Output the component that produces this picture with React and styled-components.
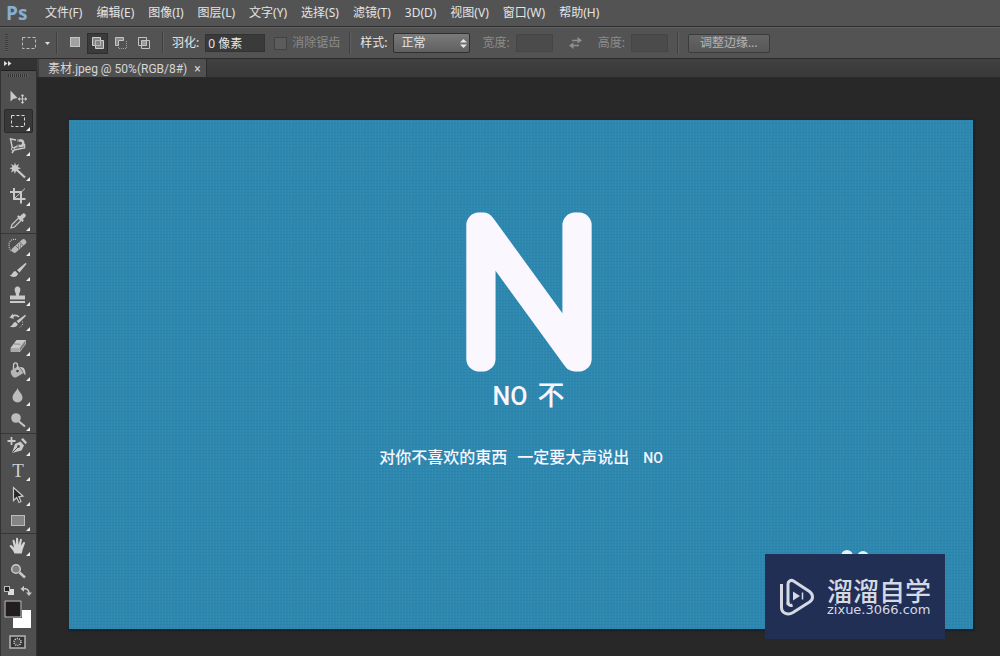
import React from 'react';
import styled, { createGlobalStyle, css } from 'styled-components';

const GlobalStyle = createGlobalStyle`
  * {
    box-sizing: border-box;
  }

  body {
    margin: 0;
    background: #282828;
    color: #e4e4e4;
    font-family: "Noto Sans", "Noto Sans CJK SC", sans-serif;
    font-size: 12px;
    line-height: 16px;
  }

  button, input, select {
    margin: 0;
    font: inherit;
    color: inherit;
  }
`;

const Window = styled.div`
  display: flex;
  flex-direction: column;
  min-height: 100vh;
`;

/* menu bar */

const MenuBar = styled.header`
  display: flex;
  align-items: center;
  height: 27px;
  padding-left: 6px;
  background: #535353;
  border-bottom: 1px solid #2e2e2e;
`;

const Logo = styled.span`
  width: 32px;
  color: #86afd8;
  font-family: "Open Sans", sans-serif;
  font-size: 19px;
  font-weight: 700;
  line-height: 24px;
`;

const Menu = styled.nav`
  display: flex;
`;

const MenuItem = styled.button`
  padding: 0 7px;
  border: 0;
  background: none;
  white-space: nowrap;
`;

/* options bar */

const OptionsBar = styled.div`
  display: flex;
  align-items: center;
  height: 32px;
  padding-left: 5px;
  background: #535353;
  border-top: 1px solid #616161;
  border-bottom: 1px solid #2b2b2b;
  white-space: nowrap;
`;

const Grip = styled.span`
  width: 3px;
  height: 18px;
  background: repeating-linear-gradient(#3a3a3a 0 1px, #5c5c5c 1px 2px);
`;

const Divider = styled.span`
  width: 2px;
  height: 22px;
  margin: 0 ${(p) => p.$gap || 8}px;
  background: #3f3f3f;
  border-right: 1px solid #5f5f5f;
`;

const Preset = styled.button`
  display: flex;
  align-items: center;
  gap: 7px;
  margin-left: 13px;
  padding: 0;
  border: 0;
  background: none;
`;

const ModeGroup = styled.div`
  display: flex;
  gap: 2px;
`;

const ModeButton = styled.button`
  display: flex;
  align-items: center;
  justify-content: center;
  width: 21px;
  height: 21px;
  padding: 0;
  border: 1px solid ${(p) => (p.$active ? '#2e2e2e' : 'transparent')};
  background: ${(p) => (p.$active ? '#3b3b3b' : 'none')};
`;

const Label = styled.label`
  color: ${(p) => (p.$muted ? '#8c8c8c' : '#e4e4e4')};
`;

const TextBox = styled.input`
  width: ${(p) => p.$width}px;
  height: 18px;
  margin: 0 ${(p) => p.$after || 0}px 0 6px;
  padding: 0 2px;
  border: 1px solid #333;
  border-radius: 0;
  background: #3a3a3a;

  &:disabled {
    border-color: #454545;
    background: #4b4b4b;
  }
`;

const CheckBox = styled.input`
  appearance: none;
  width: 13px;
  height: 13px;
  margin: 0 5px 0 0;
  border: 1px solid #424242;
  background: #5c5c5c;
`;

const SelectWrap = styled.span`
  display: grid;
  align-items: center;
  margin: 0 12px 0 6px;

  > * {
    grid-area: 1 / 1;
  }

  svg {
    justify-self: end;
    margin-right: 3px;
    pointer-events: none;
  }
`;

const Select = styled.select`
  appearance: none;
  width: 77px;
  height: 20px;
  padding: 0 7px;
  border: 1px solid #2f2f2f;
  border-radius: 2px;
  background: linear-gradient(#7a7a7a, #606060);
`;

const SwapButton = styled.button`
  display: flex;
  margin: 0 16px;
  padding: 0;
  border: 0;
  background: none;
`;

const RefineButton = styled.button`
  height: 19px;
  padding: 0 11px;
  border: 1px solid #3b3b3b;
  border-radius: 2px;
  background: linear-gradient(#656565, #575757);
  color: #b4b4b4;
  line-height: 16px;
`;

/* workspace */

const Workspace = styled.div`
  display: flex;
  flex: 1;
  background: #282828;
`;

const ToolPanel = styled.aside`
  display: flex;
  flex-direction: column;
  flex: none;
  width: 37px;
  background: #4f4f4f;
  border-left: 1px solid #333;
  border-right: 1px solid #333;
`;

const PanelHead = styled.button`
  display: flex;
  align-items: center;
  height: 12px;
  padding: 0 0 2px 3px;
  border: 0;
  border-bottom: 1px solid #222;
  background: #333;
`;

const PanelGrip = styled.span`
  width: 20px;
  height: 3px;
  margin: 3px auto 7px 7px;
  background: repeating-linear-gradient(90deg, #333 0 1px, #606060 1px 2px);
`;

const ToolGroup = styled.div`
  display: flex;
  flex-direction: column;
  gap: 1px;
  padding-left: 3px;

  & + & {
    border-top: 1px solid #363636;
  }
`;

const ToolButton = styled.button`
  position: relative;
  display: flex;
  align-items: center;
  justify-content: center;
  width: 29px;
  height: 24px;
  padding: 0 1px 0 0;
  border: 1px solid transparent;
  border-radius: 2px;
  background: none;

  ${(p) => p.$active && css`
    border-color: #2a2a2a;
    background: #383838;
  `}

  ${(p) => p.$more && css`
    &::after {
      content: "";
      position: absolute;
      right: 2px;
      bottom: 1px;
      border: 2px solid transparent;
      border-right-color: #eee;
      border-bottom-color: #eee;
    }
  `}
`;

const SwatchArea = styled.div`
  padding: 2px 0 0 3px;
  line-height: 0;
`;

const MaskButton = styled.button`
  align-self: flex-start;
  margin: 6px 0 0 8px;
  padding: 0;
  border: 0;
  background: none;
  line-height: 0;
`;

const Document = styled.main`
  display: flex;
  flex: 1;
  flex-direction: column;
  min-width: 0;
`;

const TabBar = styled.div`
  display: flex;
  height: 19px;
  padding-left: 2px;
  background: linear-gradient(#414141, #383838);
  border-bottom: 1px solid #2b2b2b;
`;

const Tab = styled.div`
  display: flex;
  align-items: center;
  gap: 7px;
  padding: 2px 5px 0 9px;
  background: #505050;
  border-right: 1px solid #2c2c2c;
  color: #d6d6d6;
  font-family: Roboto, "Noto Sans CJK SC", sans-serif;
`;

const CloseButton = styled.button`
  padding: 0;
  border: 0;
  background: none;
`;

const Stage = styled.div`
  position: relative;
  display: flex;
  flex: 1;
  padding: 42px 27px 27px 32px;
`;

const Canvas = styled.article`
  position: relative;
  display: flex;
  flex: 1;
  flex-direction: column;
  align-items: center;
  padding-top: 92px;
  overflow: hidden;
  background:
    repeating-linear-gradient(90deg, rgba(255, 255, 255, .03) 0 1px, transparent 1px 3px),
    repeating-linear-gradient(rgba(0, 30, 60, .05) 0 1px, transparent 1px 3px),
    #2d88b0;
  box-shadow: 1px 1px 2px 1px #14222a;
  color: #f8f6ff;
  font-family: "Noto Sans CJK SC", sans-serif;
`;

const Heading = styled.div`
  display: flex;
  flex-direction: column;
  align-items: center;
  padding-left: 15px;
`;

const BigLetter = styled.svg`
  display: block;
  overflow: visible;

  text {
    fill: #faf7ff;
    stroke: #faf7ff;
    stroke-width: 25px;
    stroke-linejoin: round;
    font-family: Inter, sans-serif;
    font-size: 184px;
    font-weight: 100;
    text-anchor: middle;
  }
`;

const Title = styled.h1`
  display: flex;
  align-items: baseline;
  gap: 10px;
  margin: 6px 0 0;
  font-size: 27px;
  font-weight: 500;
  line-height: 32px;

  span {
    font-family: Roboto, sans-serif;
    font-size: 25px;
  }
`;

const Subtitle = styled.p`
  display: flex;
  align-items: baseline;
  gap: 10px;
  margin: 31px 0 0;
  font-size: 16px;
  font-weight: 500;
  line-height: 24px;

  small {
    padding-left: 4px;
    font-family: Roboto, sans-serif;
    font-size: 14px;
  }
`;

const Ears = styled.svg`
  position: absolute;
  right: 104px;
  bottom: 64px;
`;

const Watermark = styled.div`
  position: absolute;
  right: 55px;
  bottom: 17px;
  display: flex;
  align-items: center;
  gap: 12px;
  width: 180px;
  height: 85px;
  padding-left: 14px;
  background: #222f55;
  color: #d5d9e4;
`;

const Brand = styled.div`
  font-family: "Noto Sans CJK SC", sans-serif;
  font-size: 26px;
  font-weight: 500;
  line-height: 26px;
`;

const Site = styled.div`
  font-family: "DejaVu Sans", sans-serif;
  font-size: 13px;
  line-height: 14px;
`;

const menus = [
  '文件(F)', '编辑(E)', '图像(I)', '图层(L)', '文字(Y)', '选择(S)',
  '滤镜(T)', '3D(D)', '视图(V)', '窗口(W)', '帮助(H)',
];

const modes = [
  {
    label: '新选区',
    art: <rect x="2.5" y="1.5" width="9" height="9" fill="#a2a2a2" stroke="#c4c4c4" />,
  },
  {
    label: '添加到选区',
    active: true,
    art: (
      <>
        <path d="M1.5 1.5h8v3h3v8h-8v-3h-3z" fill="#858585" stroke="#cfcfcf" />
        <path d="M9.5 5v4.5H5M4.5 9V4.5H9" fill="none" stroke="#b8b8b8" />
      </>
    ),
  },
  {
    label: '从选区减去',
    art: (
      <>
        <path d="M1.5 1.5h8v3h-5v5h-3z" fill="#8a8a8a" stroke="#c4c4c4" />
        <path d="M12.5 5v7.5H4.5V10" fill="none" stroke="#a0a0a0" strokeDasharray="1 1" />
      </>
    ),
  },
  {
    label: '与选区交叉',
    art: (
      <>
        <rect x="4.5" y="4.5" width="5" height="5" fill="#9a9a9a" />
        <path d="M1.5 1.5h8v8h-8zM4.5 4.5h8v8h-8z" fill="none" stroke="#c4c4c4" />
      </>
    ),
  },
];

const light = '#c9c9c9';

const toolGroups = [
  [
    {
      label: '移动工具',
      plain: true,
      art: (
        <>
          <path d="M2.5 4.5v11l2.7-2.6L9.5 12z" fill={light} />
          <path d="M14.5 9v8M10.5 13h8" stroke={light} />
          <path d="M14.5 8l-2 2.2h4zM14.5 18l-2-2.2h4zM9.8 13l2.2-2v4zM19.2 13L17 11v4z" fill={light} />
        </>
      ),
    },
    {
      label: '矩形选框工具',
      active: true,
      art: <rect x="3.5" y="4.5" width="13" height="11" fill="none" stroke="#dcdcdc" strokeDasharray="3 2" />,
    },
    {
      label: '磁性套索工具',
      art: (
        <>
          <path d="M8 4L2.5 3l2 9.5L11 9.5M4.5 12.5L6 14l-2 3M6 14l10.500-2V8" fill="none" stroke={light} strokeWidth="1.5" />
          <path d="M9 4.500h4.500a3 3 0 0 1 0 5.500H9" fill="none" stroke={light} strokeWidth="2.600" />
          <path d="M10 3v3M10 8.500v3" stroke="#555" />
          <circle cx="5" cy="13" r="1.5" fill="#4f4f4f" stroke={light} />
        </>
      ),
    },
    {
      label: '魔棒工具',
      art: (
        <>
          <path d="M7 1.500l1 3 3-1.500-1.200 3L13 7.300 9.800 8.500 11 11.500 8 10l-1 3-1.200-3L3 11.500l1.200-3L1.500 7.300 4.500 6 3 3l3 1.500z" fill={light} />
          <path d="M9.500 9.500l7.500 7" stroke={light} strokeWidth="2.200" />
        </>
      ),
    },
    {
      label: '裁剪工具',
      art: (
        <>
          <path d="M6 2v11h11.500M2 6h11v11.500" fill="none" stroke={light} strokeWidth="2" />
          <path d="M6.500 12.500L17 2.500" stroke={light} />
        </>
      ),
    },
    {
      label: '吸管工具',
      art: (
        <>
          <path d="M3 17l1-3.500 6.500-6.500 2.500 2.500L6.500 16z" fill="#555" stroke={light} strokeWidth="1.200" />
          <path d="M9 5.500l1.500-1.200 1.500 1L14.300 3a2 2 0 0 1 2.900 2.900L14.800 8l1 1.500-1.300 1.500z" fill={light} />
        </>
      ),
    },
  ],
  [
    {
      label: '污点修复画笔工具',
      art: (
        <>
          <path d="M8 3.500C4.500 2.500 1 5 1 8.500s1 6 3.500 7" fill="none" stroke={light} strokeDasharray="1 1" strokeWidth="1.300" />
          <path d="M6.500 14L15.500 6" stroke="#b9b9b9" strokeWidth="5.500" strokeLinecap="round" />
          <path d="M7.500 9.500l4 4M11.500 6l4 4" stroke="#6d6d6d" />
          <path d="M10 9h1M12 9h1M10 11h1M12 11h1" stroke="#555" />
        </>
      ),
    },
    {
      label: '画笔工具',
      art: (
        <>
          <path d="M17.800 1.800L9 9l2.500 2.500 7-8.500z" fill={light} />
          <path d="M1.500 14.500c3 .2 2.500-4 5.700-4.500l2.800 2.500c-.5 3.500-5 4.500-8.500 2z" fill={light} />
        </>
      ),
    },
    {
      label: '仿制图章工具',
      art: (
        <>
          <path d="M6.700 4.200a2.900 2.900 0 1 1 5.600 0c0 1.800-1.300 2.500-1.300 5.300h6v4H2v-4h6c0-2.800-1.300-3.500-1.300-5.300z" fill={light} />
          <path d="M2 16h15" stroke={light} strokeWidth="2" />
        </>
      ),
    },
    {
      label: '历史记录画笔工具',
      art: (
        <>
          <path d="M17.500 3.500L8.500 10l2.200 2.200 7-7z" fill={light} />
          <path d="M1.500 15.500c3.500 0 2.500-4 6-4.500l2.300 2c-.8 3.500-5 4-8.300 2.500z" fill={light} />
          <path d="M4 5.500c3-2 5.500-1 7 .5" fill="none" stroke={light} strokeWidth="1.700" />
          <path d="M1.500 6.500l4.300 1.500L5 2.500z" fill={light} />
          <path d="M14.500 10.500c1 2.500-.5 5-3.500 6" fill="none" stroke={light} strokeDasharray="1 1.500" />
        </>
      ),
    },
    {
      label: '橡皮擦工具',
      art: (
        <>
          <path d="M8.500 4h9l-6 8H2.500z" fill={light} />
          <path d="M2.500 12h9v4h-9z" fill="#a8a8a8" />
          <path d="M11.500 12l6-8v4l-6 8z" fill="#7c7c7c" stroke={light} strokeWidth=".7" />
          <path d="M6 8l6.500.2" stroke="#888" />
        </>
      ),
    },
    {
      label: '油漆桶工具',
      art: (
        <>
          <path d="M3 9.500L10.500 5l5 7-7.500 4.500c-3 .8-6-3.500-5-7z" fill="#b5b5b5" />
          <path d="M5.500 8.500V4.500c0-3.500 4-3.500 4 0v5" fill="none" stroke={light} strokeWidth="1.300" />
          <circle cx="9.500" cy="10" r="1.300" fill="#444" />
          <path d="M11.500 6c5-.5 6 3 6 8-1.500-.5-2-2-2.500-4z" fill={light} />
        </>
      ),
    },
    {
      label: '模糊工具',
      art: <path d="M9.500 2c1 3.500 5 5.700 5 9.500a5 5 0 0 1-10 0C4.500 7.700 8.500 5.500 9.500 2z" fill="#bdbdbd" />,
    },
    {
      label: '减淡工具',
      art: (
        <>
          <circle cx="8" cy="7" r="4.800" fill="#bcbcbc" />
          <path d="M11 10.500l6 5" stroke={light} strokeWidth="2" />
        </>
      ),
    },
  ],
  [
    {
      label: '添加锚点工具',
      art: (
        <>
          <path d="M-.5 5h8M3.500 1v8" stroke={light} strokeWidth="1.800" />
          <path d="M4 17l3-9 5.500-2.500 3.500 4-2.500 5z" fill={light} />
          <path d="M13 3.500l2-1.500 4 4.500-1.500 1.700z" fill={light} />
          <path d="M4.500 16.500L10 11" stroke="#4f4f4f" />
          <circle cx="10.500" cy="10.500" r="1.400" fill="#4f4f4f" />
        </>
      ),
    },
    { label: '横排文字工具', letter: 'T' },
    {
      label: '路径选择工具',
      art: <path d="M5.500 1.500v13l3.200-3 2.300 5 2-1-2.200-4.700 4.200-.6z" fill="#262626" stroke={light} strokeWidth="1.200" />,
    },
    {
      label: '矩形工具',
      art: <rect x="3.500" y="4.500" width="13" height="10" fill="#858585" stroke="#bdbdbd" />,
    },
  ],
  [
    {
      label: '抓手工具',
      art: (
        <path
          d="M6.500 17.500L5 14.500 1.800 10.500c-.6-1 .7-2 1.700-1.200L6 11.500 4.500 5c-.2-1.400 1.600-1.700 2-.4L8 8.800 8 2.800c0-1.400 2-1.400 2.100 0l.4 5.900 1.500-5.200c.4-1.300 2.200-.8 1.900.5l-1 5.600 2.300-3.100c.8-1.100 2.300-.1 1.700 1L14.700 13.500l-1 4z"
          fill="#d3d3d3"
        />
      ),
    },
    {
      label: '缩放工具',
      plain: true,
      art: (
        <>
          <circle cx="8" cy="8" r="4.300" fill="#828282" stroke={light} strokeWidth="1.500" />
          <path d="M11.500 11.500l5.500 5" stroke={light} strokeWidth="2.500" />
        </>
      ),
    },
  ],
];

const ToolLetter = styled.span`
  color: #d0d0d0;
  font-family: "Liberation Serif", serif;
  font-size: 19px;
  line-height: 20px;
`;

function Tool({ tool }) {
  return (
    <ToolButton aria-label={tool.label} $active={tool.active} $more={!tool.plain}>
      {tool.letter
        ? <ToolLetter>{tool.letter}</ToolLetter>
        : <svg width="20" height="20" viewBox="0 0 20 20" overflow="visible">{tool.art}</svg>}
    </ToolButton>
  );
}

function Options() {
  return (
    <OptionsBar>
      <Grip />
      <Preset aria-label="工具预设">
        <svg width="17" height="15" viewBox="0 0 17 15">
          <rect x="1.5" y="1.5" width="13" height="11" fill="none" stroke="#bdbdbd" strokeDasharray="3 2" />
        </svg>
        <svg width="5" height="3"><path d="M0 0h5L2.5 3z" fill="#e0e0e0" /></svg>
      </Preset>
      <Divider $gap={6} />
      <ModeGroup>
        {modes.map((mode) => (
          <ModeButton key={mode.label} aria-label={mode.label} $active={mode.active}>
            <svg width="14" height="14" viewBox="0 0 14 14">{mode.art}</svg>
          </ModeButton>
        ))}
      </ModeGroup>
      <Divider />
      <Label htmlFor="feather">羽化:</Label>
      <TextBox id="feather" defaultValue="0 像素" $width={60} $after={9} />
      <CheckBox id="smooth" type="checkbox" disabled />
      <Label htmlFor="smooth" $muted>消除锯齿</Label>
      <Divider $gap={9} />
      <Label htmlFor="style">样式:</Label>
      <SelectWrap>
        <Select id="style" defaultValue="正常">
          <option>正常</option>
        </Select>
        <svg width="7" height="9"><path d="M0 3.5h7L3.5 0zM0 5.5h7L3.5 9z" fill="#e6e6e6" /></svg>
      </SelectWrap>
      <Label htmlFor="w" $muted>宽度:</Label>
      <TextBox id="w" disabled $width={37} />
      <SwapButton aria-label="互换">
        <svg width="13" height="12" viewBox="0 0 13 12">
          <path d="M3 3.5h7M3 8.5h7" stroke="#8f8f8f" strokeWidth="1.5" />
          <path d="M8.5 0L13 3.5 8.5 6.5zM4.5 5.5L0 8.5 4.5 12z" fill="#8f8f8f" />
        </svg>
      </SwapButton>
      <Label htmlFor="h" $muted>高度:</Label>
      <TextBox id="h" disabled $width={37} />
      <Divider $gap={9} />
      <RefineButton>调整边缘...</RefineButton>
    </OptionsBar>
  );
}

function Tools() {
  return (
    <ToolPanel>
      <PanelHead aria-label="展开面板">
        <svg width="8" height="5"><path d="M0 0l3.5 2.5L0 5zM4 0l3.5 2.5L4 5z" fill="#ddd" /></svg>
      </PanelHead>
      <PanelGrip />
      {toolGroups.map((group) => (
        <ToolGroup key={group[0].label}>
          {group.map((tool) => <Tool key={tool.label} tool={tool} />)}
        </ToolGroup>
      ))}
      <SwatchArea>
        <svg width="29" height="44" viewBox="0 0 29 44">
          <rect x="4" y="4" width="6" height="6" fill="#ddd" />
          <rect x=".5" y="1.5" width="5" height="5" fill="#222" stroke="#bbb" />
          <path d="M19 4c4-1 6 1 6 4.5" fill="none" stroke={light} strokeWidth="1.5" />
          <path d="M16.5 4L20 .8v6zM22 7.5h6L25 11z" fill={light} />
          <rect x="9" y="25" width="18" height="18" fill="#fff" />
          <rect x="0" y="15" width="18" height="18" fill="#333" />
          <rect x="1" y="16" width="16" height="16" fill="#221e20" stroke="#ccc" />
        </svg>
      </SwatchArea>
      <MaskButton aria-label="以快速蒙版模式编辑">
        <svg width="18" height="14" viewBox="0 0 18 14">
          <rect x="1" y="1" width="15" height="12" fill="#333" stroke="#b5b5b5" strokeWidth="1.5" />
          <circle cx="8.5" cy="7" r="3.5" fill="#4b4b4b" stroke="#ddd" strokeWidth="1.5" strokeDasharray="1 1.2" />
        </svg>
      </MaskButton>
    </ToolPanel>
  );
}

function Poster() {
  return (
    <Canvas>
      <Heading>
        <BigLetter width="128" height="160" viewBox="0 0 128 160">
          <text x="64" y="147">N</text>
        </BigLetter>
        <Title><span>NO</span>不</Title>
      </Heading>
      <Subtitle>
        <span>对你不喜欢的東西</span>
        <span>一定要大声说出</span>
        <small>NO</small>
      </Subtitle>
      <Ears width="30" height="16" viewBox="0 0 30 16">
        <circle cx="8" cy="7" r="6" fill="#dff2f8" />
        <circle cx="24" cy="8" r="6" fill="#dff2f8" />
      </Ears>
    </Canvas>
  );
}

export default function App() {
  return (
    <Window>
      <GlobalStyle />
      <MenuBar>
        <Logo>Ps</Logo>
        <Menu>
          {menus.map((name) => <MenuItem key={name}>{name}</MenuItem>)}
        </Menu>
      </MenuBar>
      <Options />
      <Workspace>
        <Tools />
        <Document>
          <TabBar>
            <Tab>
              素材.jpeg @ 50%(RGB/8#)
              <CloseButton aria-label="关闭">×</CloseButton>
            </Tab>
          </TabBar>
          <Stage>
            <Poster />
            <Watermark>
              <svg width="36" height="38" viewBox="0 0 36 38" fill="none" stroke="#d5d9e4">
                <path d="M9 27V6c0-3 3-4.500 5.500-3l16 10.500c4 3 4 8 0 10.500L14 34.500c-5 3-11.500 1-11.500-5V6" strokeWidth="3" />
                <path d="M9 24c0 3 2 4 4.500 3" strokeWidth="3" />
                <path d="M14 13.500v9l7-4.500z" fill="#d5d9e4" stroke="none" />
                <path d="M23.500 14.500v7" strokeWidth="1.500" />
              </svg>
              <div>
                <Brand>溜溜自学</Brand>
                <Site>zixue.3066.com</Site>
              </div>
            </Watermark>
          </Stage>
        </Document>
      </Workspace>
    </Window>
  );
}
